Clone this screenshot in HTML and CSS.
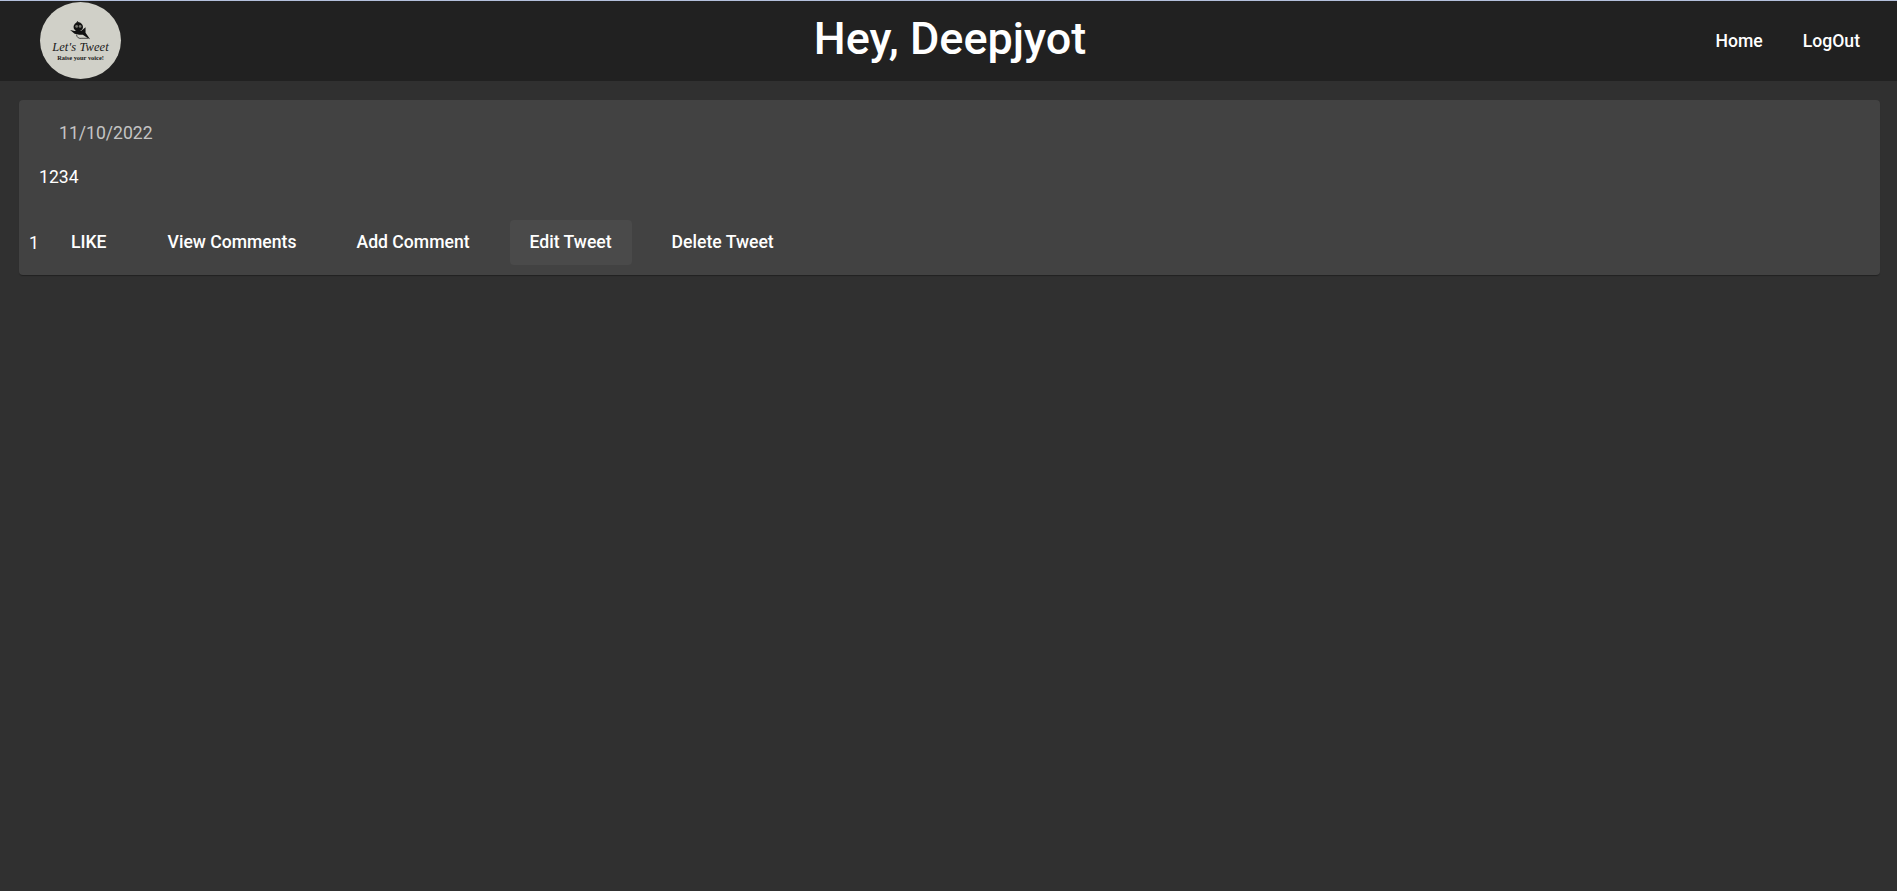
FILE: index.html
```html
<!DOCTYPE html>
<html lang="en">
<head>
  <meta charset="UTF-8" />
  <meta name="viewport" content="width=device-width, initial-scale=1" />
  <title>Let's Tweet</title>
  <link rel="stylesheet" href="styles.css">
</head>
<body>
  <header class="topbar">
    <div class="logo">
      <svg class="logo-bird" viewBox="0 0 24 22" width="22" height="20" aria-hidden="true">
        <ellipse cx="9" cy="6.5" rx="5.2" ry="5" fill="#111" />
        <path d="M8 0 L10 2 L7 2 Z" fill="#111" />
        <circle cx="7.2" cy="6" r="1.5" fill="#77776f" />
        <circle cx="11" cy="6" r="1.5" fill="#77776f" />
        <path d="M0 10 L5 11 L8 10 L12 11 L17 7 L17 13 L22 20 L18 18 L14 15 L10 15 L5 14 Z" fill="#111" />
        <path d="M7 15 Q8 20 13 19 L20 19" fill="none" stroke="#111" stroke-width="0.8" />
      </svg>
      <span class="logo-name">Let's Tweet</span>
      <span class="logo-slogan">Raise your voice!</span>
    </div>
    <h1 class="greeting">Hey, Deepjyot</h1>
    <nav class="nav">
      <a class="nav-link">Home</a>
      <a class="nav-link">LogOut</a>
    </nav>
  </header>

  <main class="content">
    <article class="card">
      <div class="card-date">11/10/2022</div>
      <p class="card-text">1234</p>
      <div class="card-actions">
        <span class="like-count">1</span>
        <button class="btn btn-like">LIKE</button>
        <button class="btn">View Comments</button>
        <button class="btn">Add Comment</button>
        <button class="btn btn-hover">Edit Tweet</button>
        <button class="btn">Delete Tweet</button>
      </div>
    </article>
  </main>
</body>
</html>
```

FILE: styles.css
```css
* {
  box-sizing: border-box;
}
html,
body {
  height: 100%;
}
body {
  margin: 0;
  background-color: #303030;
  color: #fff;
  font-family: Roboto, "Liberation Sans", sans-serif;
}
.topbar {
  display: grid;
  grid-template-columns: 1fr auto 1fr;
  align-items: center;
  height: 81px;
  padding: 0 37px 0 40px;
  background-color: #212121;
  border-top: 1px solid #b4c0dc;
}
.logo {
  display: flex;
  flex-direction: column;
  align-items: center;
  justify-content: flex-end;
  width: 81px;
  height: 77px;
  margin-bottom: 2px;
  padding-bottom: 17px;
  border-radius: 50%;
  background-color: #d0d0c8;
  color: #1a1a1a;
}
.logo-bird {
  display: block;
}
.logo-name {
  font-family: "Liberation Serif", serif;
  font-style: italic;
  font-size: 12.5px;
  line-height: 12px;
  letter-spacing: 0.1px;
  font-weight: 400;
}
.logo-slogan {
  font-family: "Liberation Serif", serif;
  font-weight: 700;
  font-size: 6.4px;
  line-height: 9px;
  white-space: nowrap;
}
.greeting {
  margin: 0;
  padding-bottom: 5px;
  font-size: 45px;
  line-height: 1.1;
  font-weight: 500;
}
.nav {
  display: flex;
  justify-content: flex-end;
  gap: 40px;
}
.nav-link {
  font-size: 17.6px;
  font-weight: 500;
}
.content {
  padding: 19px 17px 0 19px;
}
.card {
  height: 175px;
  padding: 21px 8px 9px;
  border-radius: 4px;
  background-color: #424242;
  box-shadow: 0 2px 1px -1px rgba(0, 0, 0, 0.2), 0 1px 1px 0 rgba(0, 0, 0, 0.14);
}
.card-date {
  padding-left: 32px;
  font-size: 17.6px;
  line-height: 24px;
  color: rgba(255, 255, 255, 0.7);
}
.card-text {
  margin: 20px 0 0;
  padding-left: 12px;
  font-size: 17.6px;
  line-height: 24px;
}
.card-actions {
  display: flex;
  align-items: center;
  gap: 20px;
  margin-top: 31px;
}
.like-count {
  width: 24px;
  padding-left: 2px;
  font-size: 17.6px;
  margin-right: -20px;
}
.btn {
  height: 45px;
  padding: 0 20px 1px;
  border: 0;
  border-radius: 4px;
  background: none;
  color: #fff;
  font-family: inherit;
  font-size: 17.6px;
  font-weight: 500;
}
.btn-like {
  margin-right: 1px;
}
.btn-hover {
  background-color: #4a4a4a;
}
```
